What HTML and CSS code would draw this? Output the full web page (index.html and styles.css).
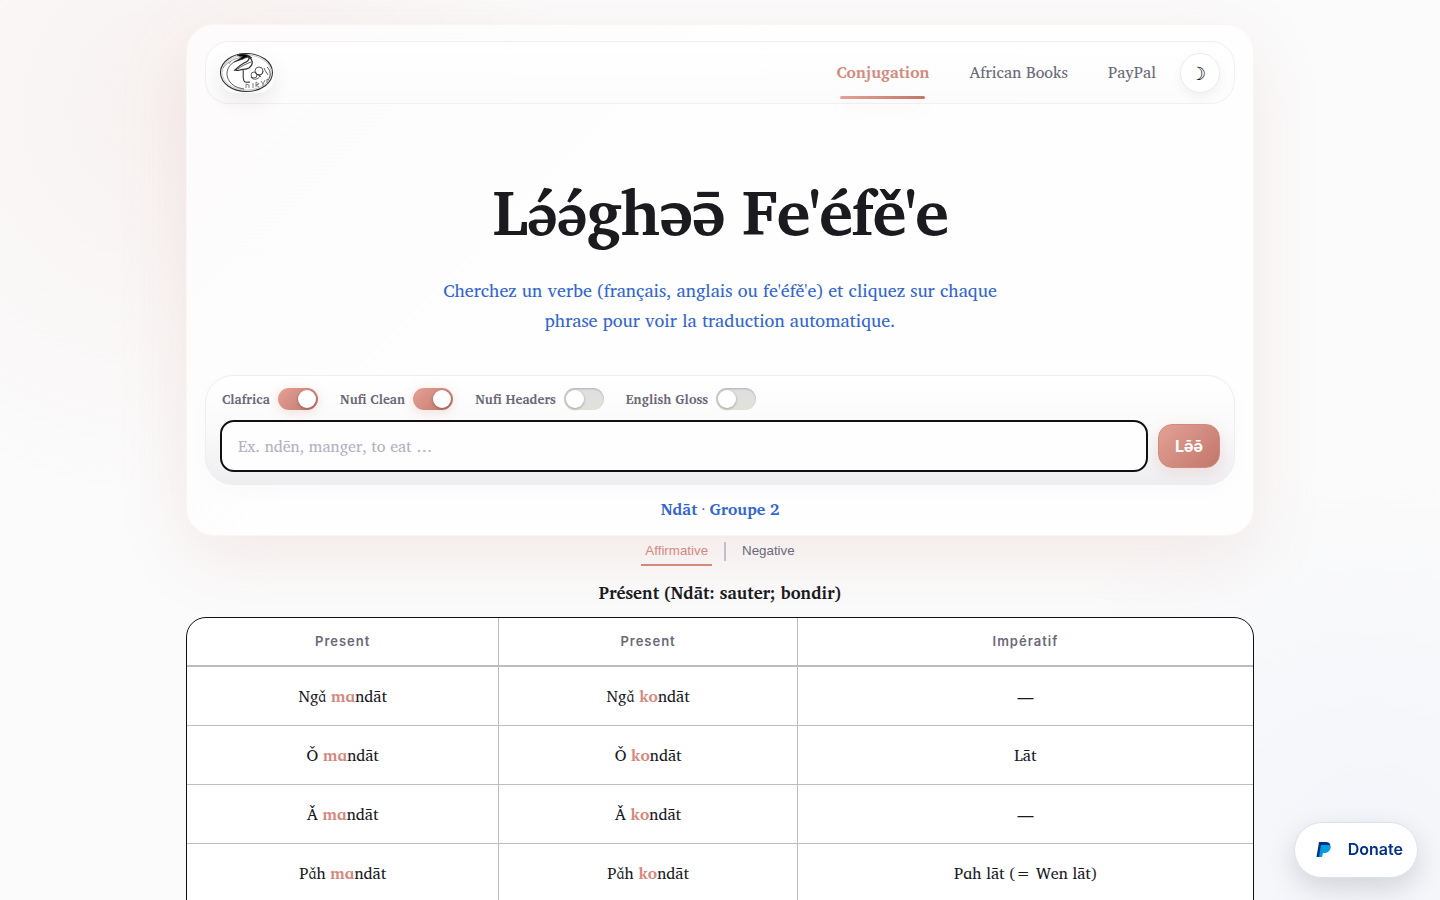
FILE: index.html
```html
<!DOCTYPE html>
<html lang="fr">
<head>
    <meta charset="UTF-8">
    <meta name="viewport" content="width=device-width, initial-scale=1">
    <title>Lə́ə́ghəə̄ Fe'éfě'e</title>
    <link rel="stylesheet" href="styles.css">
</head>
<body>
    <div class="container">
        <div class="hero">
            <header class="site-header">
                <a href="#" class="logo" aria-label="Accueil">
                    <svg viewBox="0 0 54 40" width="54" height="40" fill="none" stroke="#333" stroke-width="0.8">
                        <ellipse cx="26.500" cy="19.500" rx="26" ry="19" fill="#fff" stroke-width="1.1"/>
                        <ellipse cx="26.500" cy="19.500" rx="24.500" ry="17.500" stroke="#aaa" stroke-width="0.7"/>
                        <path d="M3 15C8 8 16 5 23 4M9 11L11 8" stroke="#888"/>
                        <path d="M17 2C22 0 28 1 32 5C29 4 26 4 23 6C20 7 17 8 14 9C18 7 21 5 23 3C21 4 19 3 17 2Z" fill="#000"/>
                        <path d="M27 3C33 6 34 11 29 15C26 17 22 16 20 17C18 18 17 17 15 17C18 14 20 12 24 10C27 9 29 7 29 5" stroke-width="1.3"/>
                        <path d="M18 16C21 13 26 11 31 9M14 9C6 14 5 23 10 29C14 34 19 35 24 36"/>
                        <path d="M23 17C24 20 22 24 24 28C25 30 28 29 30 29" stroke-width="1.1"/>
                        <ellipse cx="34" cy="22" rx="3" ry="3"/>
                        <ellipse cx="39" cy="18" rx="4" ry="4"/>
                        <path d="M36 20C38 24 43 22 43 18M44 15C45 18 47 20 48 22M47 14C51 18 51 23 48 27M31 24C33 28 39 26 40 23M38 21L41 24"/>
                        <path d="M26 35V31L29 32V35M33 30V35M36 34V29L39 31L36 32L39 34M41 28L43 31L45 27M43 31V33M47 30V26L50 28" stroke="#666"/>
                    </svg>
                </a>
                <nav class="nav">
                    <a href="#" class="nav-link active">Conjugation</a>
                    <a href="#" class="nav-link">African Books</a>
                    <a href="#" class="nav-link">PayPal</a>
                    <button class="theme-toggle" aria-label="Thème sombre">☽</button>
                </nav>
            </header>

            <h1>L<span class="tone">ə́ə́</span>ghəə̄ Fe'éfě'e</h1>
            <p class="subtitle">Cherchez un verbe (français, anglais ou fe'éfě'e) et cliquez sur chaque phrase pour voir la traduction automatique.</p>

            <form class="search-panel">
                <div class="toggles">
                    <label class="toggle">Clafrica <input type="checkbox" checked></label>
                    <label class="toggle">Nufi Clean <input type="checkbox" checked></label>
                    <label class="toggle">Nufi Headers <input type="checkbox"></label>
                    <label class="toggle">English Gloss <input type="checkbox"></label>
                </div>
                <div class="search-row">
                    <input type="text" class="search-input" placeholder="Ex. ndēn, manger, to eat …" aria-label="Verbe">
                    <button type="button" class="search-button">Lə̄ə̄</button>
                </div>
            </form>
            <div class="verb-info">Ndāt · Groupe 2</div>
        </div>

        <div class="tabs">
            <button class="tab active">Affirmative</button>
            <span class="tab-divider"></span>
            <button class="tab">Negative</button>
        </div>

        <h2>Présent (Ndāt: sauter; bondir)</h2>
        <div class="table-wrap">
            <table>
                <colgroup>
                    <col class="col-first">
                    <col class="col-second">
                    <col>
                </colgroup>
                <thead>
                    <tr><th>Present</th><th>Present</th><th>Impératif</th></tr>
                </thead>
                <tbody>
                    <tr><td>Ng<span class="tone">ɑ̌</span> <b>mɑ</b>ndāt</td><td>Ng<span class="tone">ɑ̌</span> <b>ko</b>ndāt</td><td>—</td></tr>
                    <tr><td>Ǒ <b>mɑ</b>ndāt</td><td>Ǒ <b>ko</b>ndāt</td><td>Lāt</td></tr>
                    <tr><td>Ǎ <b>mɑ</b>ndāt</td><td>Ǎ <b>ko</b>ndāt</td><td>—</td></tr>
                    <tr><td>P<span class="tone">ɑ̌</span>h <b>mɑ</b>ndāt</td><td>P<span class="tone">ɑ̌</span>h <b>ko</b>ndāt</td><td>Pɑh lāt (= Wen lāt)</td></tr>
                </tbody>
            </table>
        </div>
    </div>

    <a href="#" class="donate">
        <svg viewBox="0 0 16 18" width="16" height="18">
            <path d="M3 1H10C14 1 15 4 14 7C13 10 11 11 8 11H6L5 16H0.500Z" fill="#003087"/>
            <path d="M5 4H13C16 5 15 11 9 12H7L6 16H3Z" fill="#009cde"/>
        </svg>
        Donate
    </a>
</body>
</html>
```
FILE: styles.css
```css
:root {
    --accent: #d4897d;
    --accent-light: #e3a196;
    --accent-dark: #c2766a;
    --text: #1a1a1f;
    --muted: #6b6878;
    --blue: #3366d0;
    --line: #bdbdbd;
    --serif: "Charis SIL", "Noto Serif", serif;
    --sans: Inter, "Liberation Sans", sans-serif;
}

* {
    box-sizing: border-box;
}

html {
    scrollbar-width: none;
}

body {
    margin: 0;
    min-height: 100vh;
    overflow-x: hidden;
    font-family: var(--serif);
    font-size: 16px;
    line-height: 1.6;
    color: var(--text);
    background:
        radial-gradient(circle at 12% 12%, rgba(212, 137, 125, 0.08), transparent 400px),
        radial-gradient(circle at 95% 95%, rgba(120, 150, 240, 0.06), transparent 400px),
        #fbfbfb;
}

.container {
    max-width: 1068px;
    margin: 0 auto;
    padding-top: 24px;
}

.hero {
    padding: 16px 18px 13px;
    border: 1px solid #f8f6f6;
    border-radius: 28px;
    background: linear-gradient(135deg, #fdfbfb, #fefefe 40%);
    box-shadow: 0 20px 70px rgba(190, 120, 110, 0.14);
}

.site-header {
    display: flex;
    justify-content: space-between;
    align-items: center;
    height: 63px;
    padding: 0 14px;
    border: 1px solid #f1f0f1;
    border-radius: 24px;
    background: linear-gradient(#fff, #fcfcfc);
}

.logo {
    display: flex;
    border-radius: 16px;
    box-shadow: 0 8px 20px rgba(0, 0, 0, 0.08);
}

.nav {
    display: flex;
    align-items: center;
    gap: 8px;
}

.nav-link {
    position: relative;
    padding: 12px 16px;
    color: var(--muted);
    text-decoration: none;
}

.nav-link.active {
    color: var(--accent);
    font-weight: 700;
}

.nav-link.active::after {
    content: "";
    position: absolute;
    left: 20px;
    right: 20px;
    bottom: -2px;
    height: 3px;
    border-radius: 2px;
    background: linear-gradient(90deg, var(--accent-light), var(--accent-dark));
    box-shadow: 0 8px 18px rgba(212, 137, 125, 0.12);
}

.theme-toggle {
    width: 40px;
    height: 40px;
    padding: 0 4px 0 0;
    border: 1px solid #ececee;
    border-radius: 50%;
    background: #fff;
    color: var(--text);
    font-family: var(--serif);
    font-size: 18px;
    line-height: 1;
    box-shadow: 0 4px 12px rgba(0, 0, 0, 0.05);
    cursor: pointer;
}

h1 {
    margin: 71px 0 28px;
    font-size: 64px;
    line-height: 72px;
    letter-spacing: -0.02em;
    text-align: center;
}

.tone {
    font-family: "Gentium Plus", "Noto Serif", serif;
    line-height: 1;
}

.subtitle {
    max-width: 600px;
    margin: 0 auto 40px;
    font-size: 18px;
    line-height: 30px;
    text-align: center;
    color: var(--blue);
}

.search-panel {
    padding: 12px 14px;
    border: 1px solid #eeedef;
    border-radius: 28px;
    background: linear-gradient(#fff, #fafafa 50%, #eeeef1);
    box-shadow: 0 6px 20px rgba(0, 0, 0, 0.02);
}

.toggles {
    display: flex;
    gap: 22px;
    padding-left: 2px;
}

.toggle {
    display: flex;
    align-items: center;
    gap: 8px;
    height: 22px;
    font-size: 13px;
    font-weight: 600;
    color: var(--muted);
}

.toggle input {
    appearance: none;
    position: relative;
    width: 40px;
    height: 22px;
    margin: 0;
    border-radius: 11px;
    background: linear-gradient(#dedee2, #e2e2d9);
    box-shadow: inset 0 1px 2px rgba(0, 0, 0, 0.2);
    cursor: pointer;
}

.toggle input::before {
    content: "";
    position: absolute;
    top: 2px;
    left: 2px;
    width: 18px;
    height: 18px;
    border-radius: 50%;
    background: #fff;
    box-shadow: 0 1px 3px rgba(0, 0, 0, 0.3);
}

.toggle input:checked {
    background: linear-gradient(135deg, var(--accent-light), var(--accent-dark));
    box-shadow: 0 2px 12px rgba(212, 137, 125, 0.25);
}

.toggle input:checked::before {
    left: 20px;
}

.search-row {
    display: flex;
    align-items: center;
    gap: 10px;
    margin-top: 10px;
}

.search-input {
    flex: 1;
    height: 52px;
    padding: 0 16px;
    border: 2px solid #111;
    border-radius: 14px;
    background: #fefefe;
    font-family: var(--serif);
    font-size: 16px;
    color: var(--text);
}

.search-input::placeholder {
    color: #b3b0c2;
}

.search-button {
    height: 44px;
    padding: 0 16px;
    border: 1px solid #d08a7f;
    border-radius: 14px;
    background: linear-gradient(135deg, var(--accent-light), var(--accent-dark));
    color: #fff;
    font-family: var(--sans);
    font-size: 16px;
    font-weight: 700;
    box-shadow: 0 4px 16px rgba(212, 137, 125, 0.2);
    cursor: pointer;
}

.verb-info {
    margin-top: 11px;
    line-height: 26px;
    font-weight: 700;
    text-align: center;
    color: var(--blue);
}

.tabs {
    display: flex;
    justify-content: center;
    align-items: center;
    gap: 12px;
}

.tab {
    height: 30px;
    padding: 0 4px;
    border: 0;
    border-bottom: 2px solid transparent;
    background: none;
    color: var(--muted);
    cursor: pointer;
}

.tab.active {
    color: var(--accent);
    border-color: var(--accent);
}

.tab-divider {
    width: 2px;
    height: 19px;
    background: #c2bfcc;
}

h2 {
    margin: 13px 0 10px;
    font-size: 17px;
    line-height: 28px;
    text-align: center;
}

.table-wrap {
    overflow: hidden;
    border: 1px solid #111;
    border-radius: 20px 20px 0 0;
    background: #fff;
}

table {
    width: 100%;
    border-collapse: separate;
    border-spacing: 0;
    table-layout: fixed;
}

.col-first {
    width: 29.3%;
}

.col-second {
    width: 28%;
}

th,
td {
    padding: 0;
    border-right: 1px solid var(--line);
    text-align: center;
}

th {
    height: 49px;
    border-bottom: 2px solid var(--line);
    font-family: var(--sans);
    font-size: 13px;
    font-weight: 600;
    letter-spacing: 1px;
    color: var(--muted);
}

td {
    height: 59px;
    padding-top: 2px;
    border-bottom: 1px solid var(--line);
}

th:last-child,
td:last-child {
    border-right: 0;
}

td b {
    color: var(--accent);
}

.donate {
    position: fixed;
    right: 22px;
    bottom: 22px;
    display: flex;
    align-items: center;
    gap: 16px;
    height: 56px;
    padding: 0 14px 0 21px;
    border: 1px solid #dce1ee;
    border-radius: 28px;
    background: #fff;
    color: #003087;
    font-family: var(--sans);
    font-size: 16px;
    font-weight: 600;
    text-decoration: none;
    box-shadow: 0 10px 28px rgba(0, 0, 0, 0.14);
}
```
